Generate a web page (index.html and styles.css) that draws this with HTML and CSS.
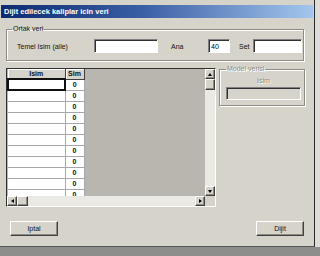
FILE: index.html
```html
<!DOCTYPE html>
<html lang="tr">
<head>
  <meta charset="UTF-8" />
  <title>Dijit edilecek kaliplar icin veri</title>
  <link rel="stylesheet" href="styles.css">
</head>
<body>
  <div class="window">
    <div class="titlebar">Dijit edilecek kaliplar icin veri</div>

    <fieldset class="group common">
      <legend>Ortak veri</legend>
      <div class="field-row">
        <label class="lbl-name">Temel Isim (aile)</label>
        <input class="txt txt-name" type="text">
        <label class="lbl-ana">Ana</label>
        <input class="txt txt-ana" type="text" value="40">
        <label class="lbl-set">Set</label>
        <input class="txt txt-set" type="text">
      </div>
    </fieldset>

    <div class="main-row">
      <div class="grid">
        <div class="view">
          <table>
            <colgroup><col class="c-name"><col class="c-sim"></colgroup>
            <thead>
              <tr><th>Isim</th><th>Sim</th></tr>
            </thead>
            <tbody>
              <tr><td class="sel"></td><td class="num">0</td></tr>
              <tr><td></td><td class="num">0</td></tr>
              <tr><td></td><td class="num">0</td></tr>
              <tr><td></td><td class="num">0</td></tr>
              <tr><td></td><td class="num">0</td></tr>
              <tr><td></td><td class="num">0</td></tr>
              <tr><td></td><td class="num">0</td></tr>
              <tr><td></td><td class="num">0</td></tr>
              <tr><td></td><td class="num">0</td></tr>
              <tr><td></td><td class="num">0</td></tr>
              <tr><td></td><td class="num">0</td></tr>
            </tbody>
          </table>
        </div>
        <div class="vbar">
          <div class="sbtn"><span class="arr up"></span></div>
          <div class="thumb v"></div>
          <div class="track"></div>
          <div class="sbtn"><span class="arr down"></span></div>
        </div>
        <div class="hbar">
          <div class="sbtn"><span class="arr left"></span></div>
          <div class="thumb h"></div>
          <div class="track"></div>
          <div class="sbtn"><span class="arr right"></span></div>
        </div>
        <div class="corner"></div>
      </div>

      <fieldset class="group model">
        <legend>Model verisi</legend>
        <div class="model-lbl">Isim</div>
        <div class="txt-off"></div>
      </fieldset>
    </div>

    <div class="btn-row">
      <button class="btn">Iptal</button>
      <button class="btn">Dijit</button>
    </div>
  </div>
  <div class="strip"></div>
</body>
</html>
```

FILE: styles.css
```css
* {
  box-sizing: border-box;
}

body {
  margin: 0;
  width: 320px;
  height: 256px;
  overflow: hidden;
  background: #dddcd9;
  font-family: 'Liberation Sans', Arial, sans-serif;
  font-size: 7px;
  color: #111;
}

.window {
  width: 315px;
  height: 247px;
  padding-top: 5px;
  background: #d6d3ca;
  border-right: 1px solid #2a2a2a;
  border-bottom: 1px solid #555;
}

.titlebar {
  width: 312px;
  height: 13px;
  margin-left: 1px;
  padding-left: 3px;
  line-height: 13px;
  font-size: 7.5px;
  font-weight: bold;
  color: #fff;
  background: linear-gradient(90deg, #0c2a72, #3a5ea4 45%, #a3c6ee);
}

.group {
  margin: 0;
  padding: 0;
  border: 1px solid #8e8b84;
  box-shadow: inset 1px 1px 0 #fff, 1px 1px 0 #fff;
}

.group legend {
  padding: 0 1px;
  line-height: 8px;
}

.common {
  width: 298px;
  margin: 7px 0 0 6px;
  padding: 6px 0 7px 10px;
}

.common legend {
  margin-left: -5px;
}

.field-row {
  display: flex;
  align-items: center;
}

.lbl-name { width: 77px; }
.lbl-ana { width: 37px; margin-left: 13px; }
.lbl-set { width: 14px; margin-left: 9px; }

.txt {
  height: 14px;
  padding: 0 2px;
  font: inherit;
  background: #fff;
  border: 1px solid;
  border-color: #808080 #fff #fff #808080;
  box-shadow: inset 1px 1px 0 #303030;
  outline: none;
}

.txt-name { width: 64px; }
.txt-ana { width: 22px; }
.txt-set { width: 49px; }

.main-row {
  display: flex;
  align-items: flex-start;
  margin: 4px 0 0 6px;
}

.grid {
  width: 210px;
  height: 139px;
  margin-top: 3px;
  display: grid;
  grid-template-columns: 1fr 10px;
  grid-template-rows: 1fr 10px;
  border: 1px solid;
  border-color: #303030 #fff #fff #303030;
  background: #d6d3ca;
}

.view {
  overflow: hidden;
  background: #b9b6af;
}

table {
  border-collapse: collapse;
  table-layout: fixed;
}

.c-name { width: 57px; }
.c-sim { width: 19px; }

th {
  height: 10px;
  padding: 0;
  font-weight: bold;
  color: #111;
  background: #d6d3ca;
  border-right: 1px solid #404040;
  border-bottom: 1px solid #404040;
  box-shadow: inset 1px 1px 0 #fff;
}

td {
  height: 11px;
  padding: 0;
  background: #fff;
  border-right: 1px solid #a8a8a8;
  border-bottom: 1px solid #a8a8a8;
}

td.sel {
  border: 2px solid #111;
}

td.num {
  text-align: center;
  font-weight: bold;
}

.vbar,
.hbar {
  display: flex;
  background: #ebe9e3;
}

.vbar { flex-direction: column; }

.track { flex: 1; }

.sbtn,
.thumb,
.btn {
  background: #d6d3ca;
  border: 1px solid;
  border-color: #fff #404040 #404040 #fff;
  box-shadow: inset -1px -1px 0 #8e8b84;
}

.sbtn {
  width: 10px;
  height: 10px;
  display: flex;
  align-items: center;
  justify-content: center;
}

.thumb.v { width: 10px; height: 11px; }
.thumb.h { width: 11px; height: 10px; }

.arr {
  width: 0;
  height: 0;
  border: 2px solid transparent;
}

.arr.up { border-bottom: 3px solid #000; border-top: 0; }
.arr.down { border-top: 3px solid #000; border-bottom: 0; }
.arr.left { border-right: 3px solid #000; border-left: 0; }
.arr.right { border-left: 3px solid #000; border-right: 0; }

.model {
  width: 85px;
  margin-left: 3px;
  padding: 4px 3px 5px 6px;
  color: #8e8b84;
}

.model legend {
  margin-left: 0;
  text-shadow: 1px 1px 0 #fff;
}

.model-lbl {
  text-align: center;
  line-height: 7px;
  text-shadow: 1px 1px 0 #fff;
}

.txt-off {
  width: 75px;
  height: 13px;
  margin-top: 3px;
  border: 1px solid;
  border-color: #808080 #fff #fff #808080;
  box-shadow: inset 1px 1px 0 #303030;
}

.btn-row {
  display: flex;
  justify-content: space-between;
  margin: 14px 10px 0 10px;
}

.btn {
  width: 48px;
  height: 15px;
  padding: 0;
  font: inherit;
  color: #111;
}

.strip {
  height: 9px;
  background: #8d8d8b;
}
```
